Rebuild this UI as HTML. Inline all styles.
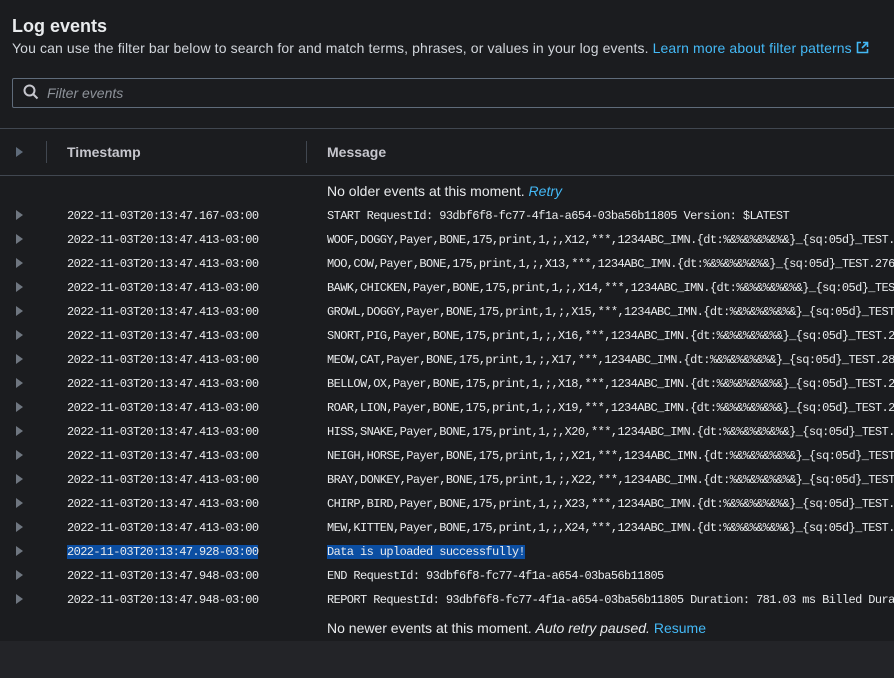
<!DOCTYPE html>
<html><head><style>
html,body{margin:0;width:894px;height:678px;overflow:hidden}
body{background:#232428;font-family:"Liberation Sans",sans-serif;color:#d1d5db;position:relative}
.wrap{position:absolute;left:0;top:0;width:894px;height:678px;overflow:hidden}
.panel{position:absolute;left:0;top:0;width:894px;height:641px;background:#1b1c1f}
.abs{position:absolute;white-space:nowrap}
h1{position:absolute;left:12px;top:16px;margin:0;font-size:18px;font-weight:bold;color:#e9ebed}
.sub{left:12px;top:40px;font-size:14px;letter-spacing:0.12px;color:#d1d5db}
a{color:#44b9f6;text-decoration:none}
.filter{position:absolute;left:12px;top:78px;width:890px;height:28px;border:1px solid #5f6b7a;border-radius:2px;background:#1b1c1f}
.hline{position:absolute;left:0;width:894px;height:1px;background:#414750}
.th{font-size:14px;font-weight:bold;color:#c6c6cd;top:144px}
.tri{position:absolute;width:0;height:0;border-left:7px solid #6f7680;border-top:5px solid transparent;border-bottom:5px solid transparent}
.mono{font-family:"Liberation Mono",monospace;font-size:12px;letter-spacing:-0.6px;color:#e9ebed}
.sel{background:#0b4ea2}
.note{font-size:14px;color:#e9ebed}
</style></head><body><div class="wrap">
<div class="panel"></div>
<h1>Log events</h1>
<div class="abs sub">You can use the filter bar below to search for and match terms, phrases, or values in your log events. <a>Learn more about filter patterns</a> <svg width="13" height="13" viewBox="0 0 13 13" style="vertical-align:-1px"><path d="M5 1.5H1.5v10h10V8M7 1.5h4.5V6M11.5 1.5L6 7" stroke="#44b9f6" stroke-width="1.6" fill="none"/></svg></div>
<div class="filter"></div>
<svg class="abs" style="left:23px;top:84px" width="16" height="16" viewBox="0 0 16 16"><circle cx="6.5" cy="6.5" r="5" stroke="#c6c6cd" stroke-width="2" fill="none"/><path d="M10 10l4.5 4.5" stroke="#c6c6cd" stroke-width="2"/></svg>
<div class="abs" style="left:47px;top:85px;font-size:14px;font-style:italic;color:#8d9299">Filter events</div>
<div class="hline" style="top:128px"></div>
<div class="hline" style="top:175px"></div>
<div class="tri" style="left:16px;top:147px;border-left-color:#5f6b7a"></div>
<div style="position:absolute;left:46px;top:141px;width:1px;height:22px;background:#414750"></div>
<div style="position:absolute;left:306px;top:141px;width:1px;height:22px;background:#414750"></div>
<div class="abs th" style="left:67px">Timestamp</div>
<div class="abs th" style="left:327px">Message</div>
<div class="abs note" style="left:327px;top:183px">No older events at this moment. <a style="font-style:italic">Retry</a></div>
<div id="rows"></div>
<div class="abs note" style="left:327px;top:620px">No newer events at this moment. <i>Auto retry paused.</i> <a>Resume</a></div>
</div>
<script>
const ts=["167","413","413","413","413","413","413","413","413","413","413","413","413","413","928","948","948"];
const msgs=["START RequestId: 93dbf6f8-fc77-4f1a-a654-03ba56b11805 Version: $LATEST"];
const an=[["WOOF","DOGGY"],["MOO","COW"],["BAWK","CHICKEN"],["GROWL","DOGGY"],["SNORT","PIG"],["MEOW","CAT"],["BELLOW","OX"],["ROAR","LION"],["HISS","SNAKE"],["NEIGH","HORSE"],["BRAY","DONKEY"],["CHIRP","BIRD"],["MEW","KITTEN"]];
const nums=["2","276","2","2","27","280","28","28","2","2","2","2","2"];
an.forEach((a,i)=>msgs.push(a[0]+","+a[1]+",Payer,BONE,175,print,1,;,X"+(12+i)+",***,1234ABC_IMN.{dt:%&%&%&%&%&}_{sq:05d}_TEST."+nums[i]));
msgs.push("Data is uploaded successfully!");
msgs.push("END RequestId: 93dbf6f8-fc77-4f1a-a654-03ba56b11805");
msgs.push("REPORT RequestId: 93dbf6f8-fc77-4f1a-a654-03ba56b11805 Duration: 781.03 ms Billed Dura");
let h="";
msgs.forEach((m,i)=>{const y=209+i*24;const s=i==14?' sel':'';
h+=`<div class="tri" style="left:16px;top:${y+1}px"></div><div class="abs mono" style="left:67px;top:${y}px"><span class="${s}">2022-11-03T20:13:47.${ts[i]}-03:00</span></div><div class="abs mono" style="left:327px;top:${y}px"><span class="${s}">${m.replace(/&/g,'&amp;')}</span></div>`;});
document.getElementById('rows').innerHTML=h;
</script>
</body></html>
